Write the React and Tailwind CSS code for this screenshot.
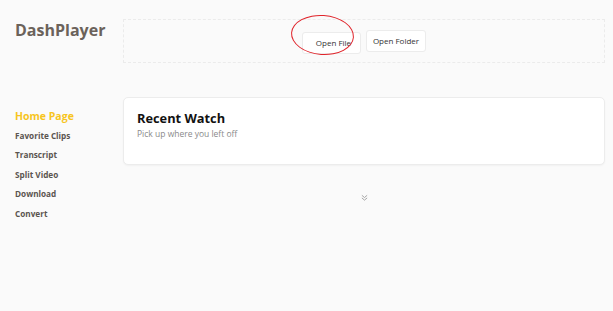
import React from "react";

const navItems = ["Home Page", "Favorite Clips", "Transcript", "Split Video", "Download", "Convert"];

const App = () => {
  return (
    <div
      className="w-[613px] h-[311px] bg-[#fafafa] grid grid-cols-[123px_1fr] pr-[8px] font-stretch-[94%]"
      style={{ fontFamily: '"Open Sans", "Noto Sans", sans-serif' }}
    >
      {/* Sidebar */}
      <div className="pl-[15px]">
        <h1 className="mt-[17px] text-[16px] font-bold text-[#6b625a] leading-[26px]">DashPlayer</h1>
        <ul className="mt-[65px] flex flex-col gap-[3px]">
          {navItems.map((item, i) => (
            <li
              key={item}
              className={
                i === 0
                  ? "text-[10.5px] leading-[16.6px] font-bold text-[#f7c51e]"
                  : "text-[8.2px] leading-[16.6px] font-bold text-[#5b5550]"
              }
            >
              {item}
            </li>
          ))}
        </ul>
      </div>

      {/* Main */}
      <div className="flex flex-col">
        <div className="mt-[19px] h-[44px] border border-dashed border-[#ebebeb] flex items-center justify-center gap-[5px]">
          <div className="relative">
            <button className="h-[22px] w-[59px] bg-white border border-[#ececec] rounded-[3px] text-[8px] text-[#333] pl-[4px]">
              Open File
            </button>
            <div className="absolute left-[-11px] top-[-13px] w-[63px] h-[40px] rounded-[50%] border-[1.5px] border-[#e0242b] rotate-[4deg]" />
          </div>
          <button className="h-[22px] w-[60px] bg-white border border-[#ececec] rounded-[3px] text-[8px] text-[#333]">
            Open Folder
          </button>
        </div>

        <div className="mt-[34px] h-[68px] bg-white rounded-[5px] border border-[#ececec] shadow-[0_1px_2px_rgba(0,0,0,0.04)] px-[13px] pt-[10px]">
          <h2 className="text-[12.8px] font-bold text-[#111] leading-[20px]">Recent Watch</h2>
          <p className="text-[8.5px] text-[#8a8a8a] leading-[12px]">Pick up where you left off</p>
        </div>

        <div className="mt-[29px] flex justify-center">
          <svg width="7" height="7" viewBox="0 0 8 8" fill="none" stroke="#9a9a9a" strokeWidth="1">
            <path d="M1 1.5 L4 4 L7 1.5" />
            <path d="M1 4.5 L4 7 L7 4.5" />
          </svg>
        </div>
      </div>
    </div>
  );
};

export default App;
